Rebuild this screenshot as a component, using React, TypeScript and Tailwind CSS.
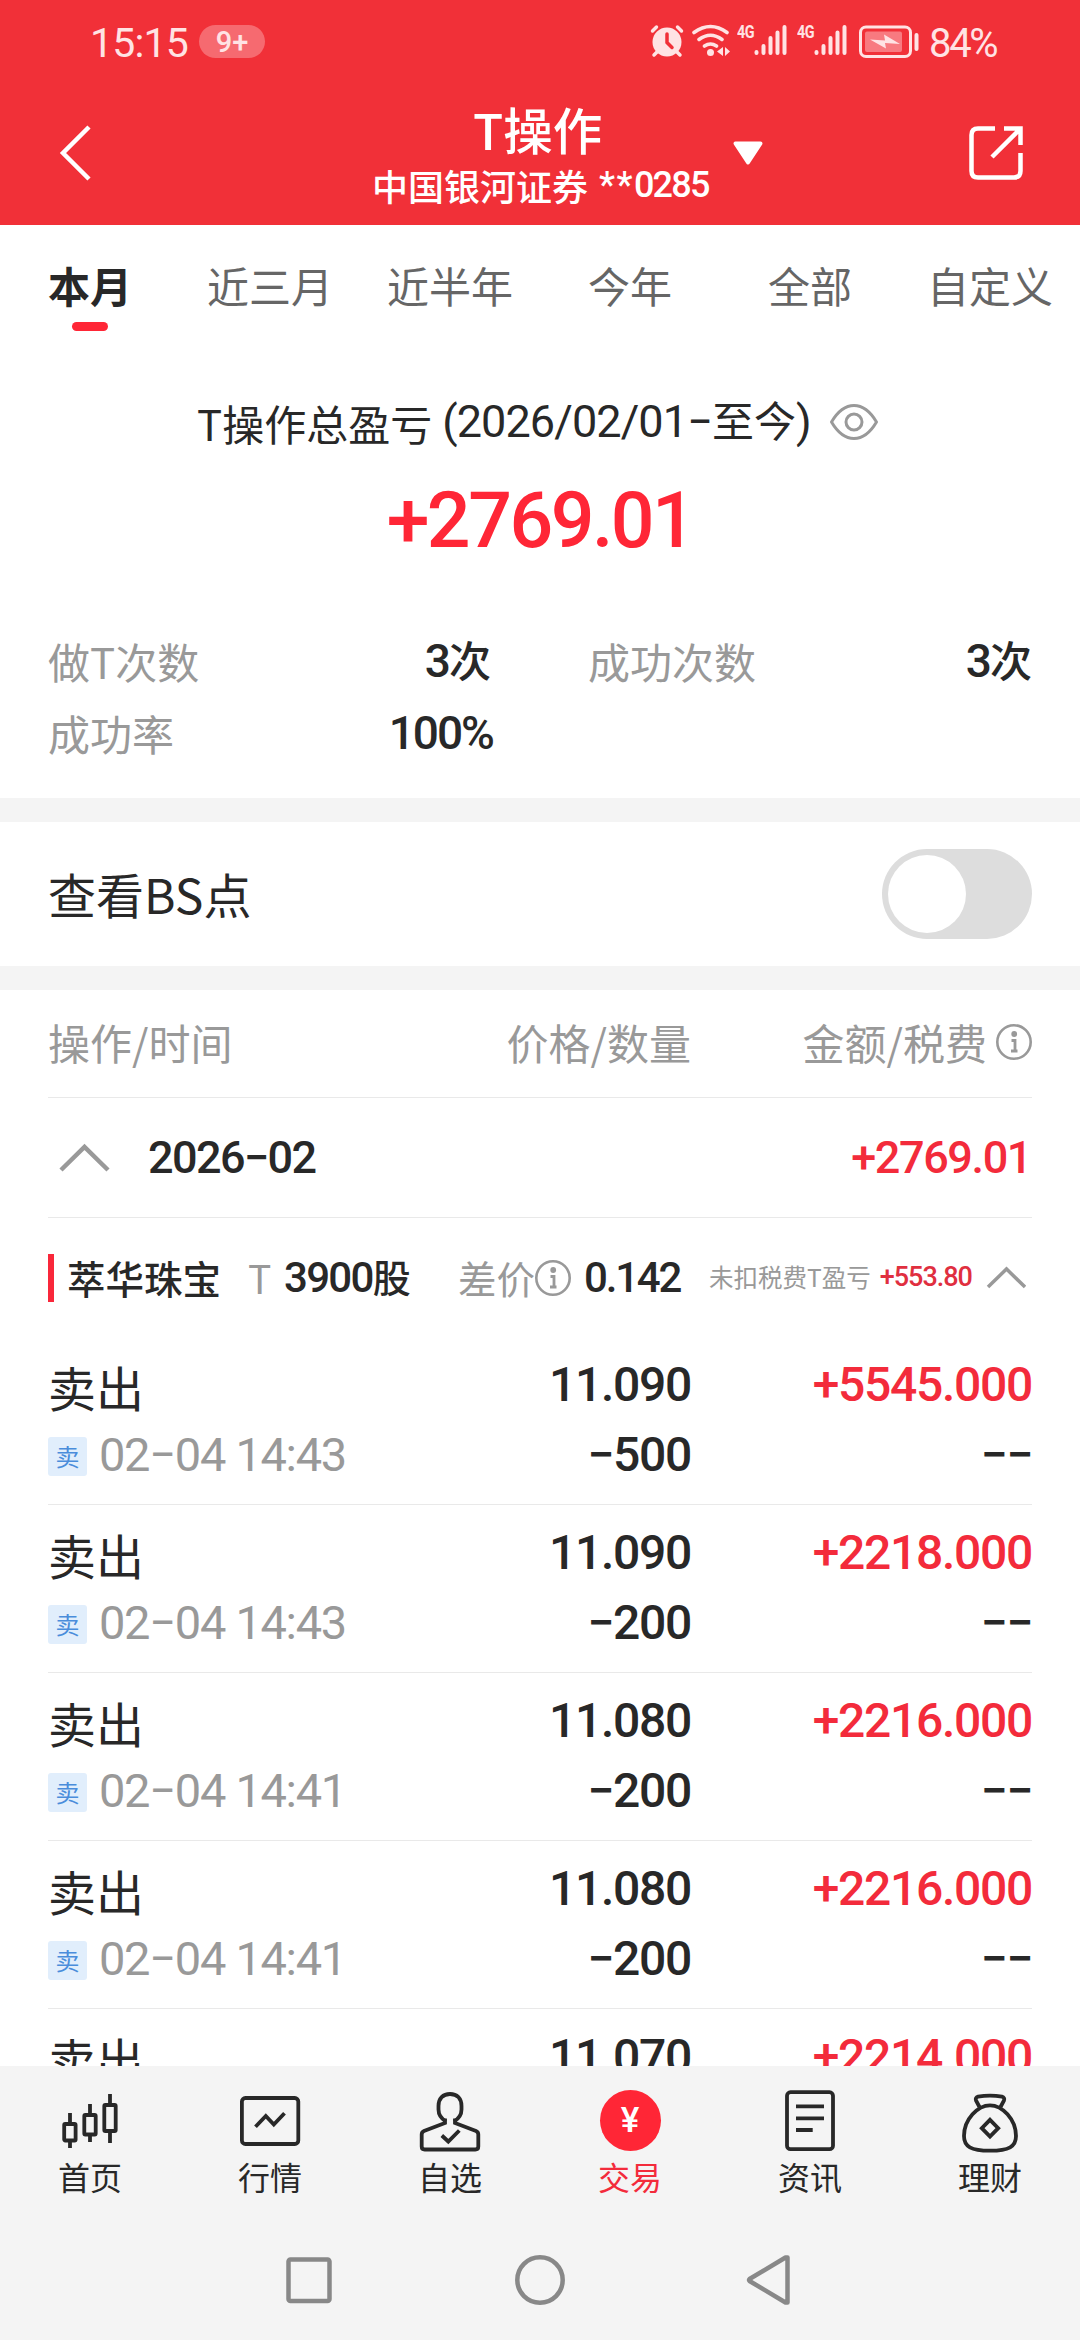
import type { ReactNode } from 'react'
import clsx from 'clsx'

const TABS = ['本月', '近三月', '近半年', '今年', '全部', '自定义']

interface Trade {
  side: string
  time: string
  price: string
  quantity: string
  amount: string
  fee: string
}

const TRADES: Trade[] = [
  { side: '卖出', time: '02−04 14:43', price: '11.090', quantity: '−500', amount: '+5545.000', fee: '−−' },
  { side: '卖出', time: '02−04 14:43', price: '11.090', quantity: '−200', amount: '+2218.000', fee: '−−' },
  { side: '卖出', time: '02−04 14:41', price: '11.080', quantity: '−200', amount: '+2216.000', fee: '−−' },
  { side: '卖出', time: '02−04 14:41', price: '11.080', quantity: '−200', amount: '+2216.000', fee: '−−' },
  { side: '卖出', time: '02−04 14:41', price: '11.070', quantity: '−200', amount: '+2214.000', fee: '−−' },
]

function Num({ className, children }: { className?: string; children: ReactNode }) {
  return (
    <span className={clsx("font-['Roboto','Noto_Sans_CJK_SC',sans-serif] whitespace-nowrap", className)}>
      {children}
    </span>
  )
}

function SignalIcon() {
  return (
    <div className="flex items-start">
      <span className="w-[17px]">
        <Num className="block origin-left scale-x-80 text-[18px] leading-[15px] font-bold tracking-[-0.5px]">4G</Num>
      </span>
      <svg className="w-[33px] h-[32px]" viewBox="0 0 33 32" stroke="currentColor" strokeWidth="4" strokeLinecap="round">
        <path d="M2.500 28v1M9.500 22v7M16.500 14v15M23.500 8.500v20.500M30.500 3v26" />
      </svg>
    </div>
  )
}

function StatusBar() {
  return (
    <div className="h-[82px] pl-[90px] pr-[84px] flex items-start justify-between text-[#ffe3e4]">
      <div className="flex items-start pt-[25px]">
        <Num className="w-[109px] text-[41px] leading-[37px] tracking-[-0.8px]">15:15</Num>
        <Num className="w-[66px] h-[33px] rounded-full bg-[#f66a70] text-center text-[29px] leading-[34px] font-medium">
          9+
        </Num>
      </div>
      <div className="flex items-start pt-[24px]">
        <svg className="w-[34px] h-[34px]" viewBox="0 0 34 34" fill="none" stroke="currentColor" strokeLinecap="round">
          <circle cx="17" cy="18" r="14.500" fill="currentColor" stroke="none" />
          <path d="M2.500 7l4-4M31.500 7l-4-4M7 28l-3 3M27 28l3 3" strokeWidth="3.500" />
          <path d="M17 10v8.500l5 5" stroke="#f13038" strokeWidth="3.500" />
        </svg>
        <svg className="ml-[8px] w-[40px] h-[34px]" viewBox="0 0 40 34" fill="none" stroke="currentColor" strokeLinecap="round">
          <path d="M2 8.500Q18.500-3.500 35 8.500M7 15.500Q18.500 7 30 15.500M12.500 22q6-4 12 0" strokeWidth="3.600" />
          <circle cx="18.500" cy="28.500" r="3.500" fill="currentColor" stroke="none" />
          <path d="M31 23v9l-6-4.500zM33 23v9l5-4.500z" fill="currentColor" stroke="none" />
        </svg>
        <div className="ml-[5px]">
          <SignalIcon />
        </div>
        <div className="ml-[10px]">
          <SignalIcon />
        </div>
        <svg className="ml-[12px] w-[61px] h-[35px]" viewBox="0 0 61 35" fill="none" stroke="currentColor">
          <rect x="1.500" y="3" width="50" height="29.500" rx="5.500" strokeWidth="3" />
          <rect x="6" y="7.500" width="37" height="20.500" rx="2" fill="#f87a80" stroke="none" />
          <path d="M11 15.500l15 1-1-6 16 9.500-15-1 1 5.500z" fill="currentColor" stroke="none" />
          <path d="M57.500 11v14" strokeWidth="4" strokeLinecap="round" />
        </svg>
        <Num className="ml-[9px] w-[67px] text-[40px] leading-[39px] tracking-[-2.3px]">84%</Num>
      </div>
    </div>
  )
}

function TitleBar() {
  return (
    <div className="relative h-[143px] px-[56px] flex justify-between text-white">
      <svg className="mt-[42px] w-[36px] h-[58px]" viewBox="0 0 36 58" fill="none" stroke="currentColor" strokeWidth="4.500">
        <path d="M33 3L7 29l26 26" />
      </svg>
      <div className="absolute top-[16px] left-[372px]">
        <div className="pl-[101px] text-[49.500px] leading-[62px] font-medium">T操作</div>
        <div className="flex items-center text-[36px] leading-[51px] font-medium">
          中国银河证券
          <Num className="ml-[11px] text-[36px] tracking-[-1.800px]">
            <span className="tracking-[1.500px]">**</span>0285
          </Num>
        </div>
      </div>
      <svg className="absolute left-[732px] top-[58px] w-[32px] h-[26px]" viewBox="0 0 32 26" fill="currentColor" stroke="currentColor" strokeWidth="4" strokeLinejoin="round">
        <path d="M3.500 3.500h25L16 22.500z" />
      </svg>
      <svg className="mt-[43px] w-[56px] h-[56px]" viewBox="0 0 56 56" fill="none" stroke="currentColor" strokeWidth="4.500">
        <path d="M27 3.500H10q-6.500 0-6.500 6.500v36q0 6.500 6.500 6.500h36q6.500 0 6.500-6.500V28" />
        <path d="M36 3.500h16.500V20M51 5L24 32" />
      </svg>
    </div>
  )
}

function InfoIcon({ className }: { className?: string }) {
  return (
    <svg className={clsx('w-[38px] h-[38px] text-[#999999]', className)} viewBox="0 0 38 38" fill="none" stroke="currentColor">
      <circle cx="19" cy="19" r="16.700" strokeWidth="2.600" />
      <circle cx="19.200" cy="11" r="2.900" fill="currentColor" stroke="none" />
      <path d="M16.500 17.500h3.500v10M16 28h6.500" strokeWidth="2.800" />
    </svg>
  )
}

function Stat({ label, children }: { label: string; children: ReactNode }) {
  return (
    <div className="flex justify-between">
      <dt className="text-[#999999]">{label}</dt>
      <dd className="flex font-medium">{children}</dd>
    </div>
  )
}

function Summary() {
  return (
    <section className="h-[466px] px-[48px] pt-[62px]">
      <div className="h-[56px] flex items-center pl-[149px]">
        <span className="pt-[2px] text-[42px] leading-[50px]">T操作总盈亏</span>
        <Num className="ml-[10px] text-[45px] leading-[50px] tracking-[-0.9px]">
          (2026/02/01−<span className="text-[42px] tracking-normal">至今</span>)
        </Num>
        <svg className="ml-[18px] w-[50px] h-[38px] text-[#999999]" viewBox="0 0 50 38" fill="none" stroke="currentColor" strokeWidth="3">
          <path d="M2.500 19C9 8 16 2.500 25 2.500S41 8 47.500 19C41 30 34 35.500 25 35.500S9 30 2.500 19z" strokeLinejoin="round" />
          <circle cx="25" cy="19" r="8" />
        </svg>
      </div>
      <Num className="block mt-[21px] h-[100px] text-center text-[77px] leading-[100px] font-medium tracking-[-2.500px] text-[#ff2636]">
        +2769.01
      </Num>
      <dl className="mt-[54px] grid grid-cols-[443px_444px] grid-rows-[72px_72px] gap-x-[97px] text-[42px] leading-[72px]">
        <Stat label="做T次数">
          <Num className="text-[46px] tracking-[-2px]">3</Num>
          <span className="-mt-[2px]">次</span>
        </Stat>
        <Stat label="成功次数">
          <Num className="text-[46px] tracking-[-2px]">3</Num>
          <span className="-mt-[2px]">次</span>
        </Stat>
        <Stat label="成功率">
          <Num className="-mr-[2px] text-[46px] tracking-[-2px]">100%</Num>
        </Stat>
      </dl>
    </section>
  )
}

const CELL = 'text-right text-[48px] leading-[66px] font-medium tracking-[-1.300px]'

function TradeRow({ trade }: { trade: Trade }) {
  return (
    <li className="h-[168px] shrink-0 border-b border-[#e9e9e9] pt-[15px] grid grid-cols-[350px_293px_341px] content-start">
      <span className="h-[70px] text-[48px] leading-[69px]">{trade.side}</span>
      <Num className={CELL}>{trade.price}</Num>
      <Num className={clsx(CELL, 'text-[#f32b3b]')}>{trade.amount}</Num>
      <div className="flex items-center h-[66px]">
        <span className="mt-[3px] w-[39px] h-[39px] rounded-[3px] bg-[#e1eefc] text-center text-[24px] leading-[37px] text-[#4a8ddb]">
          卖
        </span>
        <Num className="ml-[12px] text-[47px] leading-[66px] tracking-[-1.300px] text-[#999999]">{trade.time}</Num>
      </div>
      <Num className={CELL}>{trade.quantity}</Num>
      <Num className={CELL}>{trade.fee}</Num>
    </li>
  )
}

function NavIcon({ children }: { children: ReactNode }) {
  return (
    <svg className="w-[64px] h-[66px]" viewBox="0 0 64 66" fill="none" stroke="currentColor" strokeWidth="3.800">
      {children}
    </svg>
  )
}

const NAV_ITEMS: { label: string; icon: ReactNode; active?: boolean }[] = [
  {
    label: '首页',
    icon: (
      <NavIcon>
        <rect x="6.200" y="36" width="11.400" height="16.500" rx="1" />
        <rect x="26.300" y="27" width="11.400" height="19.500" rx="1" />
        <rect x="46.300" y="17" width="11.400" height="26" rx="1" />
        <path d="M12 25v10M12 53v7M32 16v10M32 47v7M52 6v10M52 44v11" />
      </NavIcon>
    ),
  },
  {
    label: '行情',
    icon: (
      <NavIcon>
        <rect x="3.900" y="10" width="56.400" height="46" rx="3.500" />
        <path d="M17.500 38.700L27.800 28l8 8.500L46.500 25.200" />
      </NavIcon>
    ),
  },
  {
    label: '自选',
    icon: (
      <NavIcon>
        <path d="M27 30.500V35L6 43q-2.300 1-2.300 3.500V58.500q0 3 3 3h50.600q3 0 3-3V46.500q0-2.500-2.300-3.500L37 35v-4.500" />
        <path d="M28 33.500c-5-3-7.500-7-7.500-12V18C20.500 10.500 25 6 32 6s11.500 4.500 11.500 12v3.500c0 5-2.500 9-7.500 12" />
        <path d="M23.800 47.500l6.500 6 11-11" />
      </NavIcon>
    ),
  },
  {
    label: '交易',
    active: true,
    icon: (
      <div className="w-[64px] h-[66px] pt-[2px] flex justify-center">
        <div className="size-[61px] rounded-full bg-[#ff2636] flex items-center justify-center text-white">
          <Num className="text-[35px] leading-[36px] font-medium">¥</Num>
        </div>
      </div>
    ),
  },
  {
    label: '资讯',
    icon: (
      <NavIcon>
        <rect x="9" y="4.200" width="46" height="57" rx="3.500" />
        <path d="M18 18.300h28M18 30.300h28M18 42h16.700" />
      </NavIcon>
    ),
  },
  {
    label: '理财',
    icon: (
      <NavIcon>
        <path d="M32 17.300C20 17.300 6 31 6 48c0 10.500 7 14.700 26 14.700S58 58.500 58 48C58 31 44 17.300 32 17.300z" />
        <path d="M21.500 19l-3.500-6.500q-1-3 2-3.800Q32 6.500 44 8.700q3 .8 2 3.800L42.500 19" />
        <path d="M32 31.800l8.200 8.400-8.200 8.400-8.200-8.400z" />
      </NavIcon>
    ),
  },
]

function BottomNav() {
  return (
    <nav className="h-[274px] shrink-0 bg-[#f4f4f4]">
      <div className="grid grid-cols-6 pt-[22px] h-[160px]">
        {NAV_ITEMS.map((item) => (
          <div key={item.label} className={clsx('flex flex-col items-center', item.active && 'text-[#f32b3b]')}>
            {item.icon}
            <span className="text-[32px] leading-[44px]">{item.label}</span>
          </div>
        ))}
      </div>
      <svg className="block w-[1080px] h-[100px]" viewBox="0 0 1080 100" fill="none" stroke="#888888" strokeWidth="4.500" strokeLinejoin="round">
        <rect x="288.500" y="33.500" width="41" height="41.500" rx="2" />
        <circle cx="540" cy="54" r="22.700" />
        <path d="M787.500 31.500v45q0 0-2 0L749.500 55q-1-1 0-2L785.500 31.500z" />
      </svg>
    </nav>
  )
}

export default function App() {
  return (
    <div className="w-[1080px] h-[2340px] flex flex-col overflow-hidden bg-white text-[#282828] font-['Noto_Sans_CJK_SC',sans-serif]">
      <header className="shrink-0 h-[225px] bg-[#f13038]">
        <StatusBar />
        <TitleBar />
      </header>

      <main className="h-[1841px] overflow-hidden">
        <div className="h-[107px] grid grid-cols-6 pt-[33px] text-[42px]">
          {TABS.map((tab, index) => (
            <div key={tab} className={clsx('flex flex-col items-center', index === 0 ? 'font-bold' : 'text-[#666666]')}>
              <span className="leading-[54px] whitespace-nowrap">{tab}</span>
              {index === 0 ? <span className="mt-[10px] w-[36px] h-[9px] rounded-full bg-[#ff2636]" /> : null}
            </div>
          ))}
        </div>

        <Summary />

        <section className="h-[192px] border-y-[24px] border-[#f4f4f4] px-[48px] flex items-center justify-between">
          <span className="pb-[3px] text-[48px] leading-[60px]">查看BS点</span>
          <span className="w-[150px] h-[90px] rounded-full bg-[#dddddd] p-[6px]">
            <span className="block size-[78px] rounded-full bg-white" />
          </span>
        </section>

        <section className="px-[48px]">
          <div className="h-[108px] border-b border-[#e9e9e9] grid grid-cols-[350px_293px_341px] text-[42px] leading-[103px] text-[#999999]">
            <span>操作/时间</span>
            <span className="text-right">价格/数量</span>
            <span className="-mr-px h-[103px] flex items-center justify-end">
              金额/税费
              <InfoIcon className="ml-[8px]" />
            </span>
          </div>

          <div className="h-[120px] border-b border-[#e9e9e9] flex items-center pl-[11px] pr-px">
            <svg className="w-[52px] h-[30px] text-[#999999]" viewBox="0 0 52 30" fill="none" stroke="currentColor" strokeWidth="4.500">
              <path d="M2 27L25.500 4 49 27" />
            </svg>
            <Num className="ml-[37px] text-[45px] font-medium tracking-[-1.600px]">2026−02</Num>
            <Num className="ml-auto text-[45px] font-medium tracking-[-1.400px] text-[#f32b3b]">+2769.01</Num>
          </div>

          <div className="h-[119px] flex items-center">
            <span className="w-[6px] h-[48px] bg-[#f9273a]" />
            <span className="ml-[13px] w-[155px] text-[38.500px] font-medium whitespace-nowrap">萃华珠宝</span>
            <span className="ml-[26px] w-[36px] text-[39px] text-[#999999]">T</span>
            <Num className="w-[126px] text-[42px] font-medium tracking-[-1.700px]">
              3900<span className="text-[38px]">股</span>
            </Num>
            <span className="ml-[48px] text-[38.500px] text-[#999999] whitespace-nowrap">差价</span>
            <InfoIcon className="-ml-px shrink-0" />
            <Num className="ml-[12px] w-[94px] text-[42px] font-medium tracking-[-2.200px]">0.142</Num>
            <span className="ml-[31px] text-[24.500px] text-[#999999] whitespace-nowrap">未扣税费T盈亏</span>
            <Num className="ml-[9px] w-[93px] text-[27px] font-medium tracking-[-1px] text-[#e02f3f]">+553.80</Num>
            <svg className="ml-[13px] w-[40px] h-[24px] shrink-0 text-[#999999]" viewBox="0 0 40 24" fill="none" stroke="currentColor" strokeWidth="3.500">
              <path d="M2 21L20.500 3 39 21" />
            </svg>
          </div>

          <ul>
            {TRADES.map((trade, index) => (
              <TradeRow key={index} trade={trade} />
            ))}
          </ul>
        </section>
      </main>

      <BottomNav />
    </div>
  )
}
